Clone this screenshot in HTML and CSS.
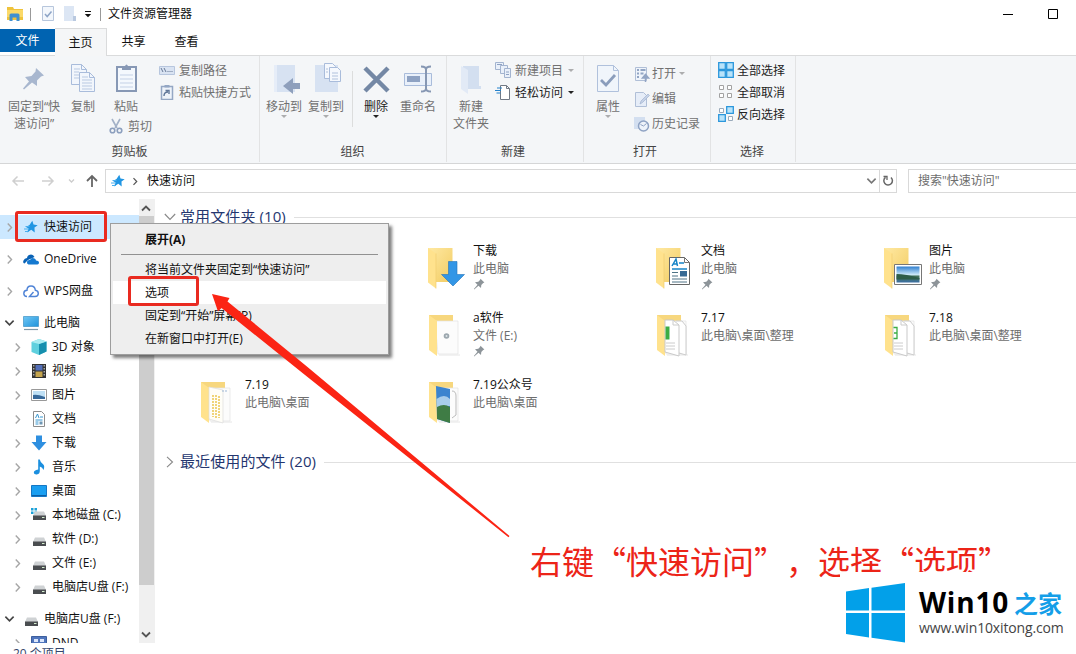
FILE: index.html
```html
<!DOCTYPE html>
<html lang="zh-CN">
<head>
  <meta charset="UTF-8">
  <title>文件资源管理器</title>
  <link rel="stylesheet" href="styles.css">
</head>
<body>

  <!-- Shared icon shapes -->
  <svg class="defs" width="0" height="0">
    <defs>
      <linearGradient id="gold" x1="0" x2="1" y1="0" y2="1">
        <stop offset="0" stop-color="#ffe9a3"/><stop offset="1" stop-color="#f2cc62"/>
      </linearGradient>
      <linearGradient id="sky" x1="0" x2="0" y1="0" y2="1">
        <stop offset="0" stop-color="#2f7fd0"/><stop offset=".5" stop-color="#c8e6f7"/><stop offset=".62" stop-color="#46735a"/><stop offset="1" stop-color="#3b6fa5"/>
      </linearGradient>
      <linearGradient id="screen" x1="0" x2="1" y1="0" y2="1">
        <stop offset="0" stop-color="#6fc6f4"/><stop offset="1" stop-color="#1f94dc"/>
      </linearGradient>
    </defs>
    <symbol id="chev" viewBox="0 0 8 12"><path d="M2 1.5 6.3 6 2 10.5" fill="none" stroke="currentColor" stroke-width="1.6"/></symbol>
    <symbol id="chev-down" viewBox="0 0 12 8"><path d="M1.5 1.5 6 6l4.500-4.500" fill="none" stroke="currentColor" stroke-width="1.800"/></symbol>
    <symbol id="star" viewBox="0 0 14 14"><path d="M8.300.7 9.500 4.600 13.700 5.200 10.500 7.600 10.700 12.500 7.300 9.800 3 12.600 4.600 8.500 2 7 5.500 5z" fill="#2196e3"/><path d="M0 9h5M1 11.500h4M1.500 6.500h4" stroke="#49aeee" stroke-width="1"/></symbol>
    <symbol id="pin" viewBox="0 0 12 12"><path d="M7.500.8 11.400 4.500 10.200 5 8.300 7 8 10 5.500 7.700 1.200 11.400.9 11 4.500 6.700 2 4.200 5.300 3.800 7 2z" fill="currentColor"/></symbol>
    <symbol id="drive" viewBox="0 0 16 16"><path d="M4 6.500h9L15 11H2z" fill="#cfd2d4"/><path d="M2 10.500h13V15H2z" fill="#4a4d50"/><path d="M11 12.500h2.500" stroke="#d6f0d0"/></symbol>
    <symbol id="folder" viewBox="0 0 40 46"><path d="M1 3H25.500V37H1z" fill="url(#gold)"/><path d="M1 3 9 8.500V43.500L1 37.500z" fill="#ffe28d"/><path d="M9 8.500V43.500" stroke="#f0cd70" stroke-width=".7"/></symbol>
    <symbol id="folder-open" viewBox="0 0 40 46"><path d="M2 3H26V9H2z" fill="#f7d77e"/><path d="M8 9 31 9V42L11 42z" fill="#fcfcfc" stroke="#e3e3e3" stroke-width=".7"/><path d="M12 43h21" stroke="#e6e6e6"/><path d="M2 3 10 9V44L2 38z" fill="#ffe28d"/></symbol>
  </svg>

  <div class="window">

    <!-- Title bar -->
    <div class="titlebar">
      <svg class="app-icon" viewBox="0 0 18 16"><path d="M1 1h6l1 2h9v11H1z" fill="#efc33c"/><path d="M1 4h16v7H1z" fill="#fbd968"/><path d="M3.500 15V9q0-1.500 1.500-1.500h7q1.500 0 1.500 1.500v6h-3v-3.500h-4V15z" fill="#3f8fd0"/></svg>
      <span class="bar"></span>
      <svg class="quick" viewBox="0 0 14 16"><path d="M1.500.5h11v14h-11z" fill="#f3f7fc" stroke="#b7c6dc"/><path d="M4 8l2.200 2.500L10.500 5.500" fill="none" stroke="#8ea5c7" stroke-width="1.500"/></svg>
      <svg class="quick" viewBox="0 0 14 16"><path d="M1 0h10v10h2v5H1z" fill="#dce6f4"/><path d="M10 10h3v5h-3z" fill="#b9c9e0"/></svg>
      <svg class="more" viewBox="0 0 8 8"><path d="M1 1.500h6" stroke="#111"/><path d="M.8 4h6.400L4 7.200z" fill="#111"/></svg>
      <span class="bar last"></span>
      <span class="title">文件资源管理器</span>
      <svg class="controls" viewBox="0 0 60 12"><path d="M0 6.500h10M45.500 1.500h9v9h-9z" fill="none" stroke="#000"/></svg>
    </div>

    <!-- Tabs -->
    <div class="tabs">
      <div class="tab file">文件</div>
      <div class="tab active">主页</div>
      <div class="tab">共享</div>
      <div class="tab">查看</div>
    </div>

    <!-- Ribbon -->
    <div class="ribbon">
      <div class="group clipboard">
        <div class="tools">
          <div class="big w60">
            <svg viewBox="0 0 32 32"><path d="M18 5 26 12.500l-3 1-4 4v5.500l-5-3.500L6 26.500l-1-1 6-7-4-4.500 6.500-1 4-4.500z" fill="#a8b7cf"/></svg>
            <span>固定到“快<br>速访问”</span>
          </div>
          <div class="big w38">
            <svg viewBox="0 0 32 32"><g fill="#f2f6fc" stroke="#a9bcdb"><path d="M4.500 1.500h10l5 5v15h-15z"/><path d="M12.500 9.500h10l5 5v14h-15z"/></g><path d="M7 6h6M7 9h5M7 12h5M7 15h5M15 14h6M15 17h10M15 20h10M15 23h10M15 26h10" stroke="#b9c9e2"/><path d="M14.500 1.500v5h5M22.500 9.500v5h5" fill="none" stroke="#a9bcdb"/></svg>
            <span>复制</span>
          </div>
          <div class="stack">
            <div class="big w48">
              <svg viewBox="0 0 32 32"><path d="M7 4h19v24H7z" fill="#f4f8fd" stroke="#8798b5" stroke-width="2"/><path d="M10 12h13M10 16h13M10 20h13M10 24h13" stroke="#c4d1e6"/><path d="M12 3h3q1.500-3 3 0h3v4h-9z" fill="#8798b5"/></svg>
              <span>粘贴</span>
            </div>
            <div class="small cut">
              <svg viewBox="0 0 16 16"><path d="M4 1l5 9M12 1l-5 9" stroke="#a3b1c7" stroke-width="1.600"/><g fill="none" stroke="#8c9fbe" stroke-width="1.600"><circle cx="4.500" cy="12.500" r="2.300"/><circle cx="11.500" cy="12.500" r="2.300"/></g></svg>
              <span>剪切</span>
            </div>
          </div>
          <div class="list">
            <div class="small">
              <svg viewBox="0 0 16 16"><path d="M.5 4.500h15v8H.5z" fill="#d9e3f2" stroke="#b7c6de"/><path d="M2 6l2 4M5 6l2 4M8.500 9.500h1M10.500 9.500h1M12.500 9.500h1" stroke="#677996"/></svg>
              <span>复制路径</span>
            </div>
            <div class="small">
              <svg viewBox="0 0 16 16"><path d="M2.500 2.500h11v13h-11z" fill="#eef3fa" stroke="#94a7c4" stroke-width="1.500"/><path d="M5.500 1h5v2.500h-5z" fill="#94a7c4"/><path d="M5 12q0-4 4-4M6.500 6.500H10V10" fill="none" stroke="#5f7698" stroke-width="1.400"/></svg>
              <span>粘贴快捷方式</span>
            </div>
          </div>
        </div>
        <div class="caption">剪贴板</div>
      </div>

      <div class="group organize">
        <div class="tools">
          <div class="big w42">
            <svg viewBox="0 0 32 32"><path d="M6 2h21v27H6z" fill="#d7e2f2"/><path d="M6 2h3v27H6z" fill="#e6edf8"/><path d="M32 20v6h-7v5L15 23l10-8v5z" fill="#8e9fbc"/></svg>
            <span>移动到</span><i class="drop"></i>
          </div>
          <div class="big w42">
            <svg viewBox="0 0 32 32"><path d="M5 2h23v27H5z" fill="#d7e2f2"/><g fill="#f5f8fd" stroke="#a9bcdb"><path d="M14.500.5h8l3 3v12h-11z"/><path d="M19.500 4.500h8l3 3v11h-11z"/></g><path d="M22 10h6M22 13h6M22 16h6M16 6h2M16 9h2" stroke="#b0c1dc"/></svg>
            <span>复制到</span><i class="drop"></i>
          </div>
          <div class="divider"></div>
          <div class="big w42 dark">
            <svg viewBox="0 0 32 32"><path d="M5 5l23 23M28 5L5 28" stroke="#7488a5" stroke-width="4.500"/></svg>
            <span>删除</span><i class="drop"></i>
          </div>
          <div class="big w42">
            <svg viewBox="0 0 32 32"><path d="M2.500 10.500h27v12h-27z" fill="#e9f0fa" stroke="#a9bcdb"/><path d="M5 13h13v6H5z" fill="#8ea2c3"/><path d="M19 3.500q5 0 5 3 0-3 5-3M19 28.500q5 0 5-3 0 3 5 3M24 6v20" fill="none" stroke="#8697b3" stroke-width="2"/></svg>
            <span>重命名</span>
          </div>
        </div>
        <div class="caption">组织</div>
      </div>

      <div class="group create">
        <div class="tools">
          <div class="big w48">
            <svg viewBox="0 0 32 32"><path d="M8 3h16v20h2v3H8z" fill="#d3dff0"/><path d="M6 3 13 7v24L6 26z" fill="#e2eaf6"/></svg>
            <span>新建<br>文件夹</span>
          </div>
          <div class="list">
            <div class="small">
              <svg viewBox="0 0 16 16"><g fill="#e9f0fa" stroke="#a3b4d0"><path d="M.5.5h8v7h-8z"/><path d="M5.500 3.500h7v8h-7z"/><path d="M9.500 6.500h6v9h-6z"/></g><path d="M2 2.500h5M11 10h3M11 12.500h3" stroke="#8ea2c3"/></svg>
              <span>新建项目</span><i class="drop"></i>
            </div>
            <div class="small dark">
              <svg viewBox="0 0 16 16"><path d="M5.500 1.500h6l3 3v11h-9z" fill="#fff" stroke="#707985"/><path d="M11.500 1.500v3h3" fill="none" stroke="#707985"/><path d="M2 4h5M0 6.500h6M1.500 9h4" stroke="#2482cc" stroke-width="1.200"/></svg>
              <span>轻松访问</span><i class="drop"></i>
            </div>
          </div>
        </div>
        <div class="caption">新建</div>
      </div>

      <div class="group open">
        <div class="tools">
          <div class="big w48">
            <svg viewBox="0 0 32 32"><path d="M5.500 2.500h16l5 5v21h-21z" fill="#f0f5fb" stroke="#b0c1dc"/><path d="M21.500 2.500v5h5" fill="none" stroke="#b0c1dc"/><path d="M9 17l5 5 9-10" fill="none" stroke="#8a9dbc" stroke-width="2.800"/></svg>
            <span>属性</span><i class="drop"></i>
          </div>
          <div class="list tall">
            <div class="small">
              <svg viewBox="0 0 16 16"><path d="M1.500 1.500h11v13h-11z" fill="#eff4fb" stroke="#b0bfd7"/><path d="M3 4h2M3 7.500h2M3 11h2M6.500 4h5M6.500 7.500h3" stroke="#92a5c4" stroke-width="2"/><path d="M11.500 16v-5M8.500 12l3-3.500 3 3.500z" fill="#92a5c4" stroke="#92a5c4" stroke-width="1.500"/></svg>
              <span>打开</span><i class="drop"></i>
            </div>
            <div class="small">
              <svg viewBox="0 0 16 16"><path d="M1.500 1.500h8l3 3v11h-11z" fill="#e6edf8" stroke="#b0bfd7"/><path d="M6 13l1-3 7-7 1.500 1.500-7 7z" fill="#c5d2e7" stroke="#a3b4d0" stroke-width=".7"/></svg>
              <span>编辑</span>
            </div>
            <div class="small">
              <svg viewBox="0 0 16 16"><path d="M0 1h11v12H0z" fill="#d3dff0"/><circle cx="9.500" cy="10" r="5" fill="#eef3fa" stroke="#8ea2c3" stroke-width="1.500"/><path d="M9.500 10l3-2.500M6.500 8.500l3 1.500" stroke="#8ea2c3"/></svg>
              <span>历史记录</span>
            </div>
          </div>
        </div>
        <div class="caption">打开</div>
      </div>

      <div class="group select">
        <div class="tools">
          <div class="list">
            <div class="small dark">
              <svg viewBox="0 0 16 16"><path d="M.7.7h6.600v6.600H.7zM8.700.7h6.600v6.600H8.700zM.7 8.700h6.600v6.600H.7zM8.700 8.700h6.600v6.600H8.700z" fill="#b9e3fa" stroke="#2b97dc" stroke-width="1.300"/></svg>
              <span>全部选择</span>
            </div>
            <div class="small dark">
              <svg viewBox="0 0 16 16"><path d="M1.500 1.500h4v4h-4zM9.500 1.500h4v4h-4zM1.500 9.500h4v4h-4zM9.500 9.500h4v4h-4z" fill="#fff" stroke="#a2a2a2"/></svg>
              <span>全部取消</span>
            </div>
            <div class="small dark">
              <svg viewBox="0 0 16 16"><path d="M1.500 2.500h4v4h-4zM10.500 10.500h4v4h-4z" fill="#fff" stroke="#9ab"/><path d="M8.700.7h6.600v6.600H8.700zM.7 8.700h6.600v6.600H.7z" fill="#b9e3fa" stroke="#2b97dc" stroke-width="1.300"/></svg>
              <span>反向选择</span>
            </div>
          </div>
        </div>
        <div class="caption">选择</div>
      </div>
    </div>

    <!-- Address bar -->
    <div class="address">
      <svg class="nav" viewBox="0 0 105 24"><g fill="none" stroke="#cfcfcf" stroke-width="1.500"><path d="M24 12H13M17.500 7.500 13 12l4.500 4.500"/><path d="M42 12h11M48.500 7.500 53 12l-4.500 4.500"/></g><path d="M69 10.500l2.500 2.500 2.500-2.500" fill="none" stroke="#ccc" stroke-width="1.300"/><path d="M92 18V7M87 12l5-5 5 5" fill="none" stroke="#666" stroke-width="1.800"/></svg>
      <div class="path">
        <svg class="star"><use href="#star"/></svg>
        <svg class="arrow"><use href="#chev"/></svg>
        <span>快速访问</span>
        <svg class="expand"><use href="#chev-down"/></svg>
        <div class="refresh"><svg viewBox="0 0 12 12"><path d="M9 2.500A4.300 4.300 0 1 1 3.500 2.300" fill="none" stroke="#666" stroke-width="1.500"/><path d="M1.500 1.500h3.500V5" fill="none" stroke="#666" stroke-width="1.300"/></svg></div>
      </div>
      <div class="search">搜索"快速访问"</div>
    </div>

    <!-- Body -->
    <div class="content">
      <div class="sidebar">
        <div class="node top current"><svg class="tw"><use href="#chev"/></svg><svg class="ic"><use href="#star" x="1" y="1" width="14" height="14"/></svg><span>快速访问</span></div>
        <div class="node top"><svg class="tw"><use href="#chev"/></svg><svg class="ic" viewBox="0 0 16 16"><path d="M1.500 12.500Q-.5 12 .5 9.500T4 7q.5-3.500 4-3.500 2.500 0 3.500 2.500L5 9z" fill="#0a62b5"/><path d="M5.500 13.500Q3.500 13 4 10.800T7 9q1.500-3 4.500-1.500 1.200.6 1.500 2 3 .2 3 2.200t-2 1.800z" fill="#1479d0"/></svg><span>OneDrive</span></div>
        <div class="node top"><svg class="tw"><use href="#chev"/></svg><svg class="ic" viewBox="0 0 16 16"><path d="M4 13.500Q.8 13.500.8 10.500T4 7.300Q4 3 8 3t4.300 4.200q3 .3 3 3.200T12 13.500H6.500l4-4.500" fill="none" stroke="#4f83d6" stroke-width="1.400"/></svg><span>WPS网盘</span></div>
        <div class="node top flush"><svg class="tw down"><use href="#chev-down"/></svg><svg class="ic" viewBox="0 0 16 16"><path d="M.5 1.500h15v10H.5z" fill="url(#screen)" stroke="#3e92c4" stroke-width=".7"/><path d="M1 14.500h14" stroke="#8099a8" stroke-width="1.200"/></svg><span>此电脑</span></div>
        <div class="node"><svg class="tw"><use href="#chev"/></svg><svg class="ic" viewBox="0 0 16 16"><path d="M.5 3 8 0l7.500 2.500v10L8 16 .5 13z" fill="#5fd0de"/><path d="M8 5l7.500-2.500v10L8 16z" fill="#168fae"/><path d="M.5 3 8 0l7.500 2.500L8 5z" fill="#a9ecf1"/></svg><span>3D 对象</span></div>
        <div class="node"><svg class="tw"><use href="#chev"/></svg><svg class="ic" viewBox="0 0 16 16"><path d="M1 1h14v14H1z" fill="#333"/><path d="M4.500 2h7v5.500h-7z" fill="#536fb8"/><path d="M4.500 8.500h7V14h-7z" fill="#c5a54e"/><path d="M2.800 2v12M13.200 2v12" stroke="#ddd" stroke-dasharray="1.500 1.500"/></svg><span>视频</span></div>
        <div class="node"><svg class="tw"><use href="#chev"/></svg><svg class="ic" viewBox="0 0 16 16"><path d="M.5 2.500h15v11H.5z" fill="#fff" stroke="#999"/><path d="M2 4h12v8H2z" fill="#bfe0f5"/><path d="M2 8q4-1 12 2v2H2z" fill="#38699a"/></svg><span>图片</span></div>
        <div class="node"><svg class="tw"><use href="#chev"/></svg><svg class="ic" viewBox="0 0 16 16"><path d="M2.500.5h8l3 3v12h-11z" fill="#fff" stroke="#8c8c8c"/><path d="M4.500 7 6.500 3l1.500 4M9 6h3M4.500 9h7M4.500 11h3M4.500 13h3" fill="none" stroke="#3796cf"/><path d="M8.500 10.500h3v3h-3z" fill="#6f97b5"/></svg><span>文档</span></div>
        <div class="node"><svg class="tw"><use href="#chev"/></svg><svg class="ic" viewBox="0 0 16 16"><path d="M5 .5h6V7h4.500L8 15.500.5 7H5z" fill="#2e8fe0"/></svg><span>下载</span></div>
        <div class="node"><svg class="tw"><use href="#chev"/></svg><svg class="ic" viewBox="0 0 16 16"><path d="M7.200.5h1.600q.6 3 3 4.500t.7 6Q11.500 8 8.800 7.500V12q0 3-3 3.500-3 .2-3-2T7.200 10.500z" fill="#1b8fdf"/></svg><span>音乐</span></div>
        <div class="node"><svg class="tw"><use href="#chev"/></svg><svg class="ic" viewBox="0 0 16 16"><path d="M.5 2.500h15v11H.5z" fill="#1a9ff1" stroke="#1577c4"/><path d="M1 12.500h14" stroke="#0c5fa5"/></svg><span>桌面</span></div>
        <div class="node"><svg class="tw"><use href="#chev"/></svg><svg class="ic" viewBox="0 0 16 16"><path d="M0 1h2.500v2.500H0zM3.500 1H6v2.500H3.500zM0 4.500h2.500V7H0zM3.500 4.500H6V7H3.500z" fill="#1ba1d8"/><use href="#drive" y="-2" width="16" height="16"/></svg><span>本地磁盘 (C:)</span></div>
        <div class="node"><svg class="tw"><use href="#chev"/></svg><svg class="ic"><use href="#drive"/></svg><span>软件 (D:)</span></div>
        <div class="node"><svg class="tw"><use href="#chev"/></svg><svg class="ic"><use href="#drive"/></svg><span>文件 (E:)</span></div>
        <div class="node last"><svg class="tw"><use href="#chev"/></svg><svg class="ic"><use href="#drive"/></svg><span>电脑店U盘 (F:)</span></div>
        <div class="node top flush"><svg class="tw down"><use href="#chev-down"/></svg><svg class="ic"><use href="#drive"/></svg><span>电脑店U盘 (F:)</span></div>
        <div class="node"><svg class="tw"><use href="#chev"/></svg><svg class="ic" viewBox="0 0 16 16"><path d="M.5 1.500h15v14H.5z" fill="#5076bd" stroke="#3d5f9e"/><path d="M3 4h4v3H3zM9 4h4v3H9zM3 9h4v3H3zM9 9h4v3H9z" fill="#dbe6fb"/></svg><span>DND</span></div>
      </div>

      <div class="scrollbar">
        <svg viewBox="0 0 12 8"><path d="M2 6.500 6 2.500l4 4" fill="none" stroke="#555" stroke-width="1.800"/></svg>
        <div class="thumb"></div>
        <svg viewBox="0 0 12 8"><path d="M2 1.500l4 4 4-4" fill="none" stroke="#555" stroke-width="1.800"/></svg>
      </div>

      <div class="main">
        <div class="heading"><svg class="hd" viewBox="0 0 12 8"><path d="M.8 1 6 6.500 11.200 1" fill="none" stroke="#888" stroke-width="1.100"/></svg><span>常用文件夹 (10)</span><hr></div>
        <div class="files">
          <div class="item c2">
            <svg viewBox="0 0 40 46"><use href="#folder" width="40" height="46"/><path d="M21.500 16.500h8.500v13h7.500L26 41 14.500 29.500h7z" fill="#3296e6" stroke="#2473bb" stroke-width=".6"/></svg>
            <div><b>下载</b><em>此电脑</em><svg class="pin"><use href="#pin"/></svg></div>
          </div>
          <div class="item">
            <svg viewBox="0 0 40 46"><use href="#folder" width="40" height="46"/><path d="M14.500 12.500h15l5 5v22h-20z" fill="#fff" stroke="#666"/><path d="M29.500 12.500v5h5" fill="none" stroke="#777"/><path d="M17 21l4-7 1.500 7M18 19h4" fill="none" stroke="#1684c7" stroke-width="1.500"/><path d="M24 18h5M17 24h15" stroke="#1684c7" stroke-width="1.300"/><path d="M17 27.500h6M17 31h6M17 34h15M17 37h15" stroke="#4e7386"/><path d="M25 26h7v5.500h-7z" fill="#366994"/></svg>
            <div><b>文档</b><em>此电脑</em><svg class="pin"><use href="#pin"/></svg></div>
          </div>
          <div class="item">
            <svg viewBox="0 0 40 46"><use href="#folder" width="40" height="46"/><path d="M11.500 19.500h27v20h-27z" fill="#fff" stroke="#777"/><path d="M13.500 21.500h23v16h-23z" fill="url(#sky)"/><path d="M13.500 29q9 0 23 4v1.500h-23z" fill="#2d5d48"/></svg>
            <div><b>图片</b><em>此电脑</em><svg class="pin"><use href="#pin"/></svg></div>
          </div>
          <div class="item c2">
            <svg viewBox="0 0 40 46"><use href="#folder-open" width="40" height="46"/><circle cx="19.500" cy="24" r="2.800" fill="#9ca7ae"/><circle cx="19.500" cy="24" r="1" fill="#dfe5e8"/></svg>
            <div><b>a软件</b><em>文件 (E:)</em><svg class="pin"><use href="#pin"/></svg></div>
          </div>
          <div class="item">
            <svg viewBox="0 0 40 46"><use href="#folder-open" width="40" height="46"/><path d="M21 9h6l4 5v29l-7-2" fill="#fff" stroke="#ccc"/><path d="M10 8h8l6 5v31l-14-4z" fill="#fff" stroke="#c9c9c9"/><path d="M18 8v5h6" fill="none" stroke="#ccc"/><path d="M10.500 14.500h4v13h-4z" fill="#3cad44"/><path d="M11 31h9M11 34h9M11 37h9" stroke="#ccc"/></svg>
            <div><b>7.17</b><em>此电脑\桌面\整理</em></div>
          </div>
          <div class="item">
            <svg viewBox="0 0 40 46"><use href="#folder-open" width="40" height="46"/><path d="M21 9h6l4 5v29l-7-2" fill="#fff" stroke="#ccc"/><path d="M10 8h8l6 5v31l-14-4z" fill="#fff" stroke="#c9c9c9"/><path d="M18 8v5h6" fill="none" stroke="#ccc"/><path d="M10.500 15.500h3.500v11h-3.500M11 21h3" fill="none" stroke="#3cad44" stroke-width="1.300"/><path d="M11 31h9M11 34h9M11 37h9" stroke="#ccc"/></svg>
            <div><b>7.18</b><em>此电脑\桌面\整理</em></div>
          </div>
          <div class="item c1">
            <svg viewBox="0 0 40 46"><use href="#folder-open" width="40" height="46"/><path d="M10 8l14 3v33l-14-4z" fill="#fffef8" stroke="#ddd" stroke-width=".7"/><path d="M14 16v22M17 16v23M20 17v22" stroke="#efd06c" stroke-width="1.800" stroke-dasharray="2 1"/><path d="M23 12h5" stroke="#9db7d6" stroke-dasharray="2 1"/></svg>
            <div><b>7.19</b><em>此电脑\桌面</em></div>
          </div>
          <div class="item">
            <svg viewBox="0 0 40 46"><use href="#folder-open" width="40" height="46"/><path d="M9 7l14 3v34L10 40z" fill="#3b84cf"/><path d="M9.500 20q8-6 13.500 0v7L10 28z" fill="#a8cdeb"/><path d="M10 28q7-4 13 0v16L10 40z" fill="#3f7c45"/><path d="M25 12q4 0 4 5v19l-4 3" fill="none" stroke="#bbb"/></svg>
            <div><b>7.19公众号</b><em>此电脑\桌面</em></div>
          </div>
        </div>
        <div class="heading"><svg class="hr" viewBox="0 0 8 12"><path d="M1 .8 6.500 6 1 11.200" fill="none" stroke="#888" stroke-width="1.100"/></svg><span>最近使用的文件 (20)</span><hr></div>
      </div>
    </div>

    <div class="statusbar">20 个项目</div>
  </div>

  <!-- Context menu -->
  <div class="menu">
    <div class="entry default">展开(A)</div>
    <div class="rule"></div>
    <div class="entry">将当前文件夹固定到“快速访问”</div>
    <div class="entry hover">选项</div>
    <div class="entry">固定到“开始”屏幕(P)</div>
    <div class="entry">在新窗口中打开(E)</div>
  </div>

  <!-- Annotations -->
  <div class="mark mark-node"></div>
  <div class="mark mark-entry"></div>
  <svg class="pointer" viewBox="0 0 310 255"><path d="M2 4 19.500 8 17.500 11.500 97.500 77 299.500 246 298.500 247.200 92.500 83 11.500 18 8 21.500z" fill="#fb2414"/></svg>
  <div class="note">右键“快速访问”，选择“选项”</div>

  <!-- Watermark -->
  <div class="brand">
    <svg viewBox="0 0 60 60"><path d="M0 8.500 23 5v22.500H0zM25.500 4.700 59 0v27.500H25.500zM0 30h23v24.500L0 51zM25.500 30H59v29.500l-33.500-4.700z" fill="#02a0e9"/></svg>
    <div>
      <div class="name">Win10<span>之家</span></div>
      <div class="url">www.win10xitong.com</div>
    </div>
  </div>

</body>
</html>
```
FILE: styles.css
```css
* {
  margin: 0;
  padding: 0;
  box-sizing: border-box;
}

body {
  width: 1076px;
  height: 654px;
  overflow: hidden;
  position: relative;
  background: #fff;
  color: #111;
  font: 12px/17px "Open Sans", "Noto Sans CJK SC", sans-serif;
  white-space: nowrap;
}

svg {
  display: block;
  flex: none;
}

.defs {
  position: absolute;
}

.window {
  display: flex;
  flex-direction: column;
  height: 654px;
}

/* Title bar */
.titlebar {
  display: flex;
  align-items: center;
  height: 28px;
  padding-left: 6px;
}

.app-icon {
  width: 18px;
  height: 16px;
}

.bar {
  width: 1px;
  height: 13px;
  margin: 0 10px 0 6px;
  background: #999;
}

.bar.last {
  margin: 0 7px 0 8px;
}

.title {
  margin-top: -1px;
}

.quick {
  width: 14px;
  height: 16px;
  margin-right: 8px;
}

.more {
  width: 8px;
  height: 8px;
  margin-left: -1px;
}

.controls {
  width: 60px;
  height: 12px;
  margin: -1px 13px 0 auto;
}

/* Tabs */
.tabs {
  display: flex;
  height: 28px;
  border-bottom: 1px solid #dadbdc;
}

.tab {
  width: 53px;
  height: 24px;
  line-height: 27px;
  text-align: center;
}

.tab.file {
  width: 55px;
  height: 23px;
  margin-top: 1px;
  line-height: 24px;
  background: #0063b1;
  color: #fff;
}

.tab.active {
  width: 52px;
  height: 28px;
  background: #f5f6f7;
  border: 1px solid #dadbdc;
  border-width: 1px 1px 0 0;
}

/* Ribbon */
.ribbon {
  display: flex;
  height: 108px;
  padding-bottom: 1px;
  background: #f4f6f8;
  border-bottom: 1px solid #d5d6d7;
  color: #717171;
}

.group {
  display: flex;
  flex-direction: column;
  justify-content: space-between;
  border-right: 1px solid #e2e3e4;
}

.clipboard { width: 260px; padding-left: 4px; }
.organize { width: 187px; padding-left: 3px; }
.create { width: 137px; }
.open { width: 127px; }
.select { width: 85px; padding-left: 7px; }

.tools {
  display: flex;
}

.caption {
  height: 19px;
  padding-right: 4px;
  text-align: center;
  color: #444;
}

.select .caption {
  padding-right: 9px;
}

.big {
  display: flex;
  flex-direction: column;
  align-items: center;
  padding-top: 7px;
  text-align: center;
}

.big svg {
  width: 32px;
  height: 32px;
  margin-bottom: 3px;
}

.w60 { width: 60px; }
.w38 { width: 38px; }
.w42 { width: 42px; }
.w48 { width: 48px; }

.dark {
  color: #222;
}

.drop {
  width: 0;
  height: 0;
  border: 3px solid transparent;
  border-top-color: currentColor;
  border-bottom: 0;
  opacity: .55;
}

.dark .drop {
  opacity: 1;
}

.divider {
  width: 1px;
  height: 56px;
  margin: 15px 2px 0 5px;
  background: #dcdddd;
}

.list {
  padding-top: 3px;
}

.small {
  display: flex;
  align-items: center;
  height: 22px;
  gap: 4px;
}

.small svg {
  width: 16px;
  height: 16px;
}

.small .drop {
  margin-left: 1px;
}

.cut {
  margin-left: 6px;
}

.clipboard .list {
  margin-left: 7px;
}

.select .small {
  gap: 3px;
}

.tall {
  padding-top: 5px;
  margin-left: 2px;
}

.tall .small {
  height: 25px;
  gap: 2px;
}

/* Address bar */
.address {
  display: flex;
  height: 32px;
  padding-top: 5px;
}

.nav {
  width: 105px;
  height: 24px;
}

.path {
  display: flex;
  align-items: center;
  width: 792px;
  height: 24px;
  padding-left: 5px;
  border: 1px solid #d9d9d9;
}

.path span {
  margin-top: -2px;
}

.path .star {
  width: 14px;
  height: 14px;
}

.path .arrow {
  width: 6px;
  height: 9px;
  margin: 0 9px 0 7px;
  color: #555;
}

.expand {
  width: 11px;
  height: 8px;
  margin: 0 2px 0 auto;
  color: #777;
}

.refresh {
  display: flex;
  align-items: center;
  justify-content: center;
  width: 17px;
  height: 22px;
  border-left: 1px solid #d9d9d9;
}

.refresh svg {
  width: 12px;
  height: 12px;
}

.search {
  flex: 1;
  height: 24px;
  margin-left: 11px;
  padding-left: 9px;
  line-height: 22px;
  border: 1px solid #d9d9d9;
  border-right: 0;
  color: #6d6d6d;
}

/* Navigation pane */
.content {
  display: flex;
  height: 447px;
  overflow: hidden;
}

.sidebar {
  flex: none;
  width: 139px;
  padding-top: 19px;
}

.node {
  display: flex;
  align-items: center;
  height: 24px;
  padding-left: 14px;
}

.node span {
  margin-top: -2px;
}

.node.top {
  padding-left: 6px;
  margin-bottom: 8px;
}

.node.flush {
  margin-bottom: 0;
}

.node.last {
  margin-bottom: 8px;
}

.node.current {
  background: #cce8ff;
}

.tw {
  width: 7px;
  height: 11px;
  color: #a6a6a6;
}

.tw.down {
  width: 11px;
  height: 8px;
  margin: 0 -2px;
  color: #444;
}

.ic {
  width: 16px;
  height: 16px;
  margin: 0 5px 0 10px;
}

.scrollbar {
  display: flex;
  flex: none;
  flex-direction: column;
  align-items: flex-start;
  width: 16px;
  margin-top: 3px;
  background: #f0f0f0;
}

.scrollbar svg {
  width: 12px;
  height: 8px;
  margin: 5px 0 4px 1px;
}

.thumb {
  width: 15px;
  height: 369px;
  margin-bottom: auto;
  background: #cdcdcd;
}

/* File list */
.main {
  flex: 1;
  padding: 10px 0 0 9px;
}

.heading {
  display: flex;
  align-items: center;
  height: 22px;
  font-size: 15px;
  letter-spacing: .1px;
  color: #24366f;
}

.heading span {
  margin-top: -2px;
}

.heading .hd {
  width: 12px;
  height: 8px;
  margin-right: 4px;
}

.heading .hr {
  width: 8px;
  height: 12px;
  margin: 0 6px 0 2px;
}

.heading hr {
  flex: 1;
  height: 1px;
  margin-left: 8px;
  border: 0;
  background: #e0e0e0;
}

.files {
  display: grid;
  grid-template-columns: repeat(4, 228px);
  grid-auto-rows: 67px;
  padding: 14px 0 8px 35px;
}

.item {
  display: flex;
  line-height: 18px;
}

.item > svg {
  width: 40px;
  height: 46px;
  margin: 3px 6px 0 0;
}

.item b,
.item em {
  display: block;
  font-weight: normal;
  font-style: normal;
}

.item em {
  color: #6d6d6d;
}

.item .pin {
  width: 12px;
  height: 12px;
  color: #8d9499;
}

.c1 { grid-column: 1; }
.c2 { grid-column: 2; }

.statusbar {
  height: 11px;
  padding-left: 13px;
  overflow: hidden;
  line-height: 21px;
  color: #35466b;
}

/* Context menu */
.menu {
  position: absolute;
  left: 110px;
  top: 223px;
  width: 279px;
  height: 132px;
  padding: 4px 2px;
  background: #eee;
  border: 1px solid #9d9d9d;
  box-shadow: 3px 3px 3px rgba(0, 0, 0, .5);
}

.entry {
  height: 23px;
  padding-left: 32px;
  line-height: 23px;
}

.entry.default {
  font-weight: bold;
}

.entry.hover {
  background: #fff;
}

.rule {
  height: 1px;
  margin: 3px 8px;
  background: #919191;
}

/* Annotations */
.mark {
  position: absolute;
  border: 3px solid #e92a20;
  border-radius: 3px;
}

.mark-node {
  left: 15px;
  top: 211px;
  width: 92px;
  height: 31px;
}

.mark-entry {
  left: 128px;
  top: 276px;
  width: 71px;
  height: 30px;
}

.pointer {
  position: absolute;
  left: 210px;
  top: 290px;
  width: 310px;
  height: 255px;
}

.note {
  position: absolute;
  left: 530px;
  top: 538px;
  font: 32px/44px "Noto Sans CJK SC", sans-serif;
  text-spacing-trim: space-all;
  font-kerning: none;
  color: #ec2418;
}

/* Watermark */
.brand {
  position: absolute;
  left: 840px;
  top: 572px;
  display: flex;
  width: 236px;
  height: 76px;
  padding: 11px 0 0 6px;
  background: #fff;
}

.brand svg {
  width: 60px;
  height: 60px;
  margin-right: 13px;
}

.name {
  height: 36px;
  font-size: 28px;
  font-weight: bold;
  line-height: 38px;
  letter-spacing: .8px;
  color: #000;
}

.name span {
  margin-left: 5px;
  font-size: 24px;
  letter-spacing: 0;
  color: #149ee8;
}

.url {
  font-size: 14px;
  line-height: 18px;
  letter-spacing: -.15px;
  color: #444;
}
```
